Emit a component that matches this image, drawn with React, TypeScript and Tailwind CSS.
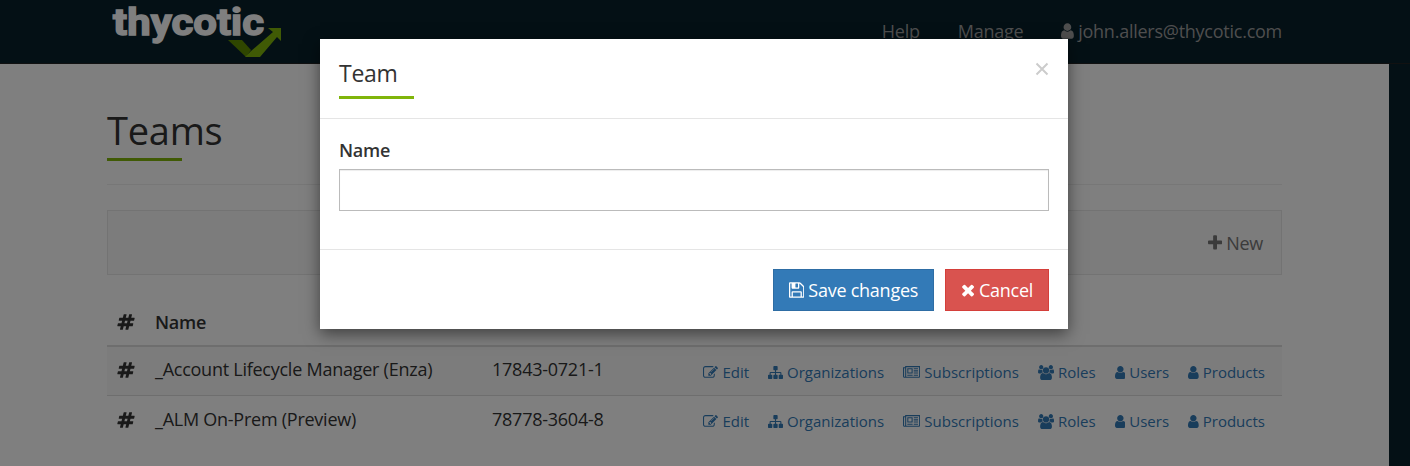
import React from "react";

type IconDef = { box: string; w: number; d: string };

const icons = {
  user: { box: "256 0 1280 1792", w: 1280, d: "M1536 1399q0 109-62.5 187t-150.5 78h-854q-88 0-150.5-78t-62.5-187q0-85 8.5-160.5t31.5-152 58.5-131 94-89 134.5-34.5q131 128 313 128t313-128q76 0 134.5 34.5t94 89 58.5 131 31.5 152 8.5 160.5zm-256-887q0 159-112.5 271.5t-271.5 112.5-271.5-112.5-112.5-271.5 112.5-271.5 271.5-112.5 271.5 112.5 112.5 271.5z" },
  plus: { box: "192 0 1408 1792", w: 1408, d: "M1600 736v192q0 40-28 68t-68 28h-416v416q0 40-28 68t-68 28h-192q-40 0-68-28t-28-68v-416h-416q-40 0-68-28t-28-68v-192q0-40 28-68t68-28h416v-416q0-40 28-68t68-28h192q40 0 68 28t28 68v416h416q40 0 68 28t28 68z" },
  times: { box: "192 0 1408 1792", w: 1408, d: "M1490 1322q0 40-28 68l-136 136q-28 28-68 28t-68-28l-294-294-294 294q-28 28-68 28t-68-28l-136-136q-28-28-28-68t28-68l294-294-294-294q-28-28-28-68t28-68l136-136q28-28 68-28t68 28l294 294 294-294q28-28 68-28t68 28l136 136q28 28 28 68t-28 68l-294 294 294 294q28 28 28 68z" },
  floppy: { box: "128 0 1536 1792", w: 1536, d: "M512 1536h768v-384h-768v384zm896 0h128v-896q0-14-10-38.5t-20-34.5l-281-281q-10-10-34-20t-39-10v416q0 40-28 68t-68 28h-576q-40 0-68-28t-28-68v-416h-128v1280h128v-416q0-40 28-68t68-28h832q40 0 68 28t28 68v416zm-384-928v-320q0-13-9.5-22.5t-22.5-9.5h-192q-13 0-22.5 9.5t-9.5 22.5v320q0 13 9.5 22.5t22.5 9.5h192q13 0 22.5-9.5t9.5-22.5zm640 32v928q0 40-28 68t-68 28h-1344q-40 0-68-28t-28-68v-1344q0-40 28-68t68-28h928q40 0 88 20t76 48l280 280q28 28 48 76t20 88z" },
  edit: { box: "0 0 1792 1792", w: 1792, d: "M888 1184l116-116-152-152-116 116v56h96v96h56zm440-720q-16-16-33 1l-350 350q-17 17-1 33t33-1l350-350q17-17 1-33zm80 594v190q0 119-84.5 203.5t-203.5 84.5h-832q-119 0-203.5-84.5t-84.5-203.5v-832q0-119 84.5-203.5t203.5-84.5h832q63 0 117 25 15 7 18 23 3 17-9 29l-49 49q-14 14-32 8-23-6-45-6h-832q-66 0-113 47t-47 113v832q0 66 47 113t113 47h832q66 0 113-47t47-113v-126q0-13 9-22l64-64q15-15 35-7t20 29zm-96-738l288 288-672 672h-288v-288zm444 132l-92 92-288-288 92-92q28-28 68-28t68 28l152 152q28 28 28 68t-28 68z" },
  sitemap: { box: "0 0 1792 1792", w: 1792, d: "M1792 1248v320q0 40-28 68t-68 28h-320q-40 0-68-28t-28-68v-320q0-40 28-68t68-28h96v-192h-512v192h96q40 0 68 28t28 68v320q0 40-28 68t-68 28h-320q-40 0-68-28t-28-68v-320q0-40 28-68t68-28h96v-192h-512v192h96q40 0 68 28t28 68v320q0 40-28 68t-68 28h-320q-40 0-68-28t-28-68v-320q0-40 28-68t68-28h96v-192q0-52 38-90t90-38h512v-192h-96q-40 0-68-28t-28-68v-320q0-40 28-68t68-28h320q40 0 68 28t28 68v320q0 40-28 68t-68 28h-96v192h512q52 0 90 38t38 90v192h96q40 0 68 28t28 68z" },
  news: { box: "0 0 2048 1792", w: 2048, d: "M1024 512h-384v384h384v-384zm128 640v128h-640v-128h640zm0-768v640h-640v-640h640zm640 768v128h-512v-128h512zm0-256v128h-512v-128h512zm0-256v128h-512v-128h512zm0-256v128h-512v-128h512zm-1536 960v-960h-128v960q0 26 19 45t45 19 45-19 19-45zm1664 0v-1088h-1536v1088q0 33-11 64h1483q26 0 45-19t19-45zm128-1216v1216q0 80-56 136t-136 56h-1664q-80 0-136-56t-56-136v-1088h256v-128h1792z" },
  users: { box: "0 0 1920 1792", w: 1920, d: "M593 896q-162 5-265 128h-134q-82 0-138-40.5t-56-118.5q0-353 124-353 6 0 43.5 21t97.5 42.5 119 21.5q67 0 133-23-5 37-5 66 0 139 81 256zm1071 637q0 120-73 189.5t-194 69.5h-874q-121 0-194-69.5t-73-189.5q0-53 3.5-103.5t14-109 26.5-108.5 43-97.5 62-81 85.5-53.5 111.5-20q10 0 43 21.5t73 48 107 48 135 21.5 135-21.5 107-48 73-48 43-21.5q61 0 111.5 20t85.5 53.5 62 81 43 97.5 26.5 108.5 14 109 3.5 103.5zm-1024-1277q0 106-75 181t-181 75-181-75-75-181 75-181 181-75 181 75 75 181zm704 384q0 159-112.5 271.5t-271.5 112.5-271.5-112.5-112.5-271.5 112.5-271.5 271.5-112.5 271.5 112.5 112.5 271.5zm576 225q0 78-56 118.5t-138 40.5h-134q-103-123-265-128 81-117 81-256 0-29-5-66 66 23 133 23 59 0 119-21.5t97.5-42.5 43.5-21q124 0 124 353zm-128-609q0 106-75 181t-181 75-181-75-75-181 75-181 181-75 181 75 75 181z" },
  hashtag: { box: "0 0 1792 1792", w: 1792, d: "M991 1024l64-256h-254l-64 256h254zm768-504l-56 224q-7 24-31 24h-327l-64 256h311q15 0 25 12 10 14 6 28l-56 224q-5 24-31 24h-327l-81 328q-7 24-31 24h-224q-16 0-26-12-9-12-6-28l78-312h-254l-81 328q-7 24-31 24h-225q-15 0-25-12-9-12-6-28l78-312h-311q-15 0-25-12-9-12-6-28l56-224q7-24 31-24h327l64-256h-311q-15 0-25-12-10-14-6-28l56-224q5-24 31-24h327l81-328q7-24 32-24h224q15 0 25 12 9 12 6 28l-78 312h254l81-328q7-24 32-24h224q15 0 25 12 9 12 6 28l-78 312h311q15 0 25 12 9 12 6 28z" },
} satisfies Record<string, IconDef>;

type IconName = keyof typeof icons;

function Icon({ name, size }: { name: IconName; size: number }) {
  const icon = icons[name];
  return (
    <svg viewBox={icon.box} width={(icon.w / 1792) * size} height={size} fill="currentColor" className="shrink-0" aria-hidden="true">
      <path d={icon.d} />
    </svg>
  );
}

function Logo() {
  return (
    <svg width="172" height="60" viewBox="0 0 172 60" className="ml-[5px]" role="img" aria-label="thycotic">
      <text x="1" y="34.5" textLength="151" lengthAdjust="spacingAndGlyphs" fill="#fff" stroke="#fff" strokeWidth="1.4" letterSpacing="0" fontFamily="'Liberation Sans Narrow','Roboto',sans-serif" fontWeight="700" fontSize="37">
        thycotic
      </text>
      <path d="M116 40h14l9 10-5 7z" fill="#5f8c00" />
      <path d="M133 57h15l17-20 4 4V28h-13l5 4-22 19z" fill="#80b50b" />
    </svg>
  );
}

const actions: { icon: IconName; label: string }[] = [
  { icon: "edit", label: "Edit" },
  { icon: "sitemap", label: "Organizations" },
  { icon: "news", label: "Subscriptions" },
  { icon: "users", label: "Roles" },
  { icon: "user", label: "Users" },
  { icon: "user", label: "Products" },
];

function Row({ name, code, striped }: { name: string; code: string; striped?: boolean }) {
  return (
    <div className={striped ? "flex h-[48px] items-start bg-[#f9f9f9]" : "flex h-[50px] items-start border-t border-[#ddd] pt-px"}>
      <div className="flex w-[48px] pt-[14px] pl-[10px]">
        <Icon name="hashtag" size={18} />
      </div>
      <div className="w-[337px] pt-[9px]">{name}</div>
      <div className="pt-[9px]">{code}</div>
      <div
        className={
          striped
            ? "ml-auto flex gap-[19px] pt-[15px] pr-[17px] text-[15px] leading-[21px] tracking-normal text-[#337ab7]"
            : "ml-auto flex gap-[19px] pt-[14px] pr-[17px] text-[15px] leading-[21px] tracking-normal text-[#337ab7]"
        }
      >
        {actions.map((a) => (
          <a key={a.label} className="flex items-center gap-1">
            <Icon name={a.icon} size={15} />
            {a.label}
          </a>
        ))}
      </div>
    </div>
  );
}

export default function App() {
  return (
    <div className="relative h-[466px] w-[1410px] overflow-hidden bg-[#08202b] font-['Open_Sans','Noto_Sans',sans-serif] text-[18px] leading-[26px] tracking-[-0.25px] text-[#333]">
      <header className="h-16 border-b border-[#222] pl-[107px]">
        <div className="flex w-[1175px] items-start justify-between">
          <Logo />
          <nav className="flex items-start gap-[38px] pt-[18px] text-[#9d9d9d]">
            <a>Help</a>
            <a>Manage</a>
            <a className="flex items-center gap-1">
              <Icon name="user" size={18} />
              john.allers@thycotic.com
            </a>
          </nav>
        </div>
      </header>

      <main className="h-[402px] w-[1389px] bg-white pl-[107px]">
        <div className="w-[1175px]">
          <div className="h-[121px] border-b border-[#eee] pt-[43px]">
            <h1 className="text-[38px] leading-[46px]">Teams</h1>
            <div className="mt-[5px] h-[3px] w-[75px] bg-[#80b50b]" />
          </div>
          <div className="mt-[25px] flex h-[65px] items-center justify-end border border-[#e7e7e7] bg-[#f8f8f8] pr-[18px] text-[#777]">
            <a className="flex items-center gap-1">
              <Icon name="plus" size={18} />
              New
            </a>
          </div>
          <div className="mt-[25px]">
            <div className="flex h-[47px] border-b-2 border-[#ddd] font-semibold">
              <div className="flex w-[48px] pt-[13px] pl-[10px]">
                <Icon name="hashtag" size={18} />
              </div>
              <div className="pt-[9px]">Name</div>
            </div>
            <Row name="_Account Lifecycle Manager (Enza)" code="17843-0721-1" striped />
            <Row name="_ALM On-Prem (Preview)" code="78778-3604-8" />
          </div>
        </div>
      </main>

      <div className="absolute inset-0 flex items-start bg-black/50 pt-[39px] pl-[320px]">
        <section className="h-[290px] w-[748px] bg-white shadow-[0_5px_15px_rgba(0,0,0,0.5)]" role="dialog">
          <div className="flex h-20 justify-between border-b border-[#e5e5e5] pr-[19px] pl-[19px]">
            <div className="pt-[18px]">
              <h2 className="text-[23px] leading-[33px]">Team</h2>
              <div className="mt-[6px] h-[3px] w-[75px] bg-[#80b50b]" />
            </div>
            <button className="flex h-[59px] items-center" aria-label="Close">
              <svg width="14" height="14" viewBox="0 0 14 14" stroke="#ccc" strokeWidth="2" fill="none">
                <path d="M1.5 1.5l11 11M12.5 1.5l-11 11" />
              </svg>
            </button>
          </div>
          <div className="h-[131px] border-b border-[#e5e5e5] px-[19px] pt-[18px]">
            <label className="block font-semibold">Name</label>
            <input className="mt-[6px] block h-[42px] w-full border border-[#bbb] bg-white shadow-[inset_0_1px_1px_rgba(0,0,0,0.075)] outline-none" />
          </div>
          <div className="flex justify-end gap-[11px] pt-[19px] pr-[19px] text-white">
            <button className="flex h-[42px] w-[161px] items-center justify-center gap-1 border border-[#2e6da4] bg-[#337ab7] tracking-[-0.25px]">
              <Icon name="floppy" size={18} />
              Save changes
            </button>
            <button className="flex h-[42px] w-[104px] items-center justify-center gap-1 border border-[#d43f3a] bg-[#d9534f] tracking-[-0.25px]">
              <Icon name="times" size={18} />
              Cancel
            </button>
          </div>
        </section>
      </div>
    </div>
  );
}
